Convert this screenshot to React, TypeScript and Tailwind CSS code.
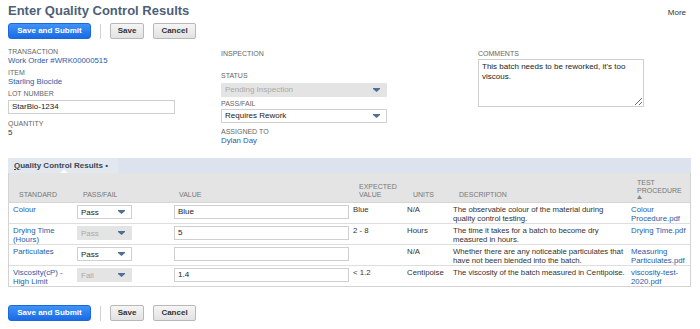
import React from "react";

type Row = {
  std: string[];
  pf: string;
  pfDisabled: boolean;
  value: string;
  expected: string;
  units: string;
  desc: string[];
  link: string[];
};

const ROWS: Row[] = [
  { std: ["Colour"], pf: "Pass", pfDisabled: false, value: "Blue", expected: "Blue", units: "N/A", desc: ["The observable colour of the material during", "quality control testing."], link: ["Colour", "Procedure.pdf"] },
  { std: ["Drying Time", "(Hours)"], pf: "Pass", pfDisabled: true, value: "5", expected: "2 - 8", units: "Hours", desc: ["The time it takes for a batch to become dry", "measured in hours."], link: ["Drying Time.pdf"] },
  { std: ["Particulates"], pf: "Pass", pfDisabled: false, value: "", expected: "", units: "N/A", desc: ["Whether there are any noticeable particulates that", "have not been blended into the batch."], link: ["Measuring", "Particulates.pdf"] },
  { std: ["Viscosity(cP) -", "High Limit"], pf: "Fail", pfDisabled: true, value: "1.4", expected: "< 1.2", units: "Centipoise", desc: ["The viscosity of the batch measured in Centipoise."], link: ["viscosity-test-", "2020.pdf"] },
];

const COLS = "grid grid-cols-[64px_97px_179px_54px_46px_178px_63px]";

function Arrow() {
  return (
    <svg width="7" height="4" viewBox="0 0 7 4">
      <path d="M0 0h7v1L3.5 4 0 1z" fill="#4f6f96" />
    </svg>
  );
}

function Select({ value, disabled, className }: { value: string; disabled?: boolean; className: string }) {
  return (
    <div
      className={`flex items-center justify-between border pl-[3px] pr-[6px] text-[8px] ${
        disabled ? "bg-[#e4e4e4] border-[#e4e4e4] text-[#aaaaaa]" : "bg-white border-[#cfcfcf] text-[#222]"
      } ${className}`}
    >
      <span>{value}</span>
      <Arrow />
    </div>
  );
}

function Label({ children, className = "" }: { children: React.ReactNode; className?: string }) {
  return <div className={`text-[7px] leading-[8px] text-[#666] uppercase ${className}`}>{children}</div>;
}

function Buttons() {
  return (
    <div className="flex items-center pl-[8px]">
      <button className="h-[16px] w-[83px] rounded-[3px] bg-gradient-to-b from-[#3f92f7] to-[#1a6be6] border border-[#1a68dd] text-white text-[8px] font-bold">
        Save and Submit
      </button>
      <div className="ml-[9px] h-[15px] w-px bg-[#d2d2d2]" />
      <button className="ml-[9px] h-[16px] w-[34px] rounded-[2px] bg-gradient-to-b from-[#f5f5f5] to-[#e2e2e2] border border-[#b8b8b8] text-[#333] text-[8px] font-bold">
        Save
      </button>
      <button className="ml-[9px] h-[16px] w-[43px] rounded-[2px] bg-gradient-to-b from-[#f5f5f5] to-[#e2e2e2] border border-[#b8b8b8] text-[#333] text-[8px] font-bold">
        Cancel
      </button>
    </div>
  );
}

export default function App() {
  return (
    <div className="w-[700px] h-[329px] overflow-hidden bg-white text-[#333] font-['Liberation_Sans',Arial,sans-serif]">
      {/* Title */}
      <div className="flex items-baseline justify-between pl-[8px] pr-[14px] pt-[3px]">
        <h1 className="text-[13px] leading-[16px] font-bold text-[#4d5f79]">Enter Quality Control Results</h1>
        <span className="text-[8px] text-[#333]">More</span>
      </div>

      <div className="mt-[4px]">
        <Buttons />
      </div>

      {/* Primary fields */}
      <div className="mt-[9px] flex pl-[8px]">
        <div className="w-[213px]">
          <Label>Transaction</Label>
          <div className="text-[7.8px] leading-[10px] text-[#2a5ca8]">Work Order #WRK00000515</div>
          <Label className="mt-[3px]">Item</Label>
          <div className="text-[7.8px] leading-[10px] text-[#2a5ca8]">Starling Biocide</div>
          <Label className="mt-[3px]">Lot Number</Label>
          <div className="mt-[2px] h-[14px] w-[167px] border border-[#cfcfcf] pl-[3px] text-[8px] leading-[12px] text-[#222]">
            StarBio-1234
          </div>
          <Label className="mt-[6px]">Quantity</Label>
          <div className="text-[8px] leading-[10px]">5</div>
        </div>

        <div className="w-[257px] pt-[2px]">
          <Label>Inspection</Label>
          <Label className="mt-[14px]">Status</Label>
          <Select value="Pending Inspection" disabled className="mt-[3px] h-[14px] w-[166px]" />
          <Label className="mt-[3px]">Pass/Fail</Label>
          <Select value="Requires Rework" className="mt-[1px] h-[14px] w-[166px]" />
          <Label className="mt-[5px]">Assigned To</Label>
          <div className="text-[7.8px] leading-[10px] text-[#2a5ca8]">Dylan Day</div>
        </div>

        <div className="w-[166px] pt-[2px]">
          <Label>Comments</Label>
          <textarea
            readOnly
            className="mt-[1px] block h-[48px] w-[166px] border border-[#cfcfcf] px-[3px] pt-[2px] text-[8px] leading-[10px] text-[#222] outline-none"
            value="This batch needs to be reworked, it's too viscous."
          />
        </div>
      </div>

      {/* Sublist */}
      <div className="mt-[12px] ml-[8px] w-[683px]">
        <div className="flex h-[15px] bg-[#dce3ee]">
          <div className="relative flex w-[110px] items-center bg-[#e3e7ee] pl-[6px] text-[8px] font-bold text-[#3b4656]">
            <span>
              <span className="underline">Q</span>uality Control Results •
            </span>
            <svg className="absolute left-[51px] bottom-0" width="10" height="3" viewBox="0 0 10 3">
              <path d="M0 3C3 3 3 0 5 0s2 3 5 3z" fill="#fff" />
            </svg>
          </div>
        </div>

        <div className="border-x border-b border-[#d3d3d3]">
          <div className={`${COLS} h-[30px] bg-[#e4e4e4] border-b border-[#d6d6d6] text-[7px] leading-[8px] text-[#777] uppercase`}>
            <div className="self-end pl-[10px] pb-[3px]">Standard</div>
            <div className="self-end pl-[10px] pb-[3px]">Pass/Fail</div>
            <div className="self-end pl-[9px] pb-[3px]">Value</div>
            <div className="self-end pl-[10px] pb-[3px]">Expected<br />Value</div>
            <div className="self-end pl-[10px] pb-[3px]">Units</div>
            <div className="self-end pl-[10px] pb-[3px]">Description</div>
            <div className="self-end pl-[10px] pb-[3px]">
              Test<br />Procedure<br />
              <svg width="5" height="4" viewBox="0 0 5 4">
                <path d="M2.5 0 5 4H0z" fill="#8a8a8a" />
              </svg>
            </div>
          </div>

          {ROWS.map((r, i) => (
            <div
              key={i}
              className={`${COLS} bg-white text-[7.8px] leading-[9px] ${i < ROWS.length - 1 ? "border-b border-[#dedede]" : ""}`}
            >
              <div className="pl-[4px] pt-[2px] h-[20px] text-[#2a5ca8]">
                {r.std.map((s) => (
                  <div key={s}>{s}</div>
                ))}
              </div>
              <div className="pl-[4px] pt-[2px]">
                <Select value={r.pf} disabled={r.pfDisabled} className="h-[14px] w-[55px]" />
              </div>
              <div className="pl-[4px] pt-[2px]">
                <div className="h-[14px] w-[175px] border border-[#cfcfcf] pl-[3px] text-[8px] leading-[12px] text-[#222]">{r.value}</div>
              </div>
              <div className="pl-[4px] pt-[2px]">{r.expected}</div>
              <div className="pl-[4px] pt-[2px]">{r.units}</div>
              <div className="pl-[4px] pt-[2px] whitespace-nowrap tracking-[-0.05px]">
                {r.desc.map((d) => (
                  <div key={d}>{d}</div>
                ))}
              </div>
              <div className="pl-[4px] pt-[2px] whitespace-nowrap text-[#2a5ca8]">
                {r.link.map((l) => (
                  <div key={l}>{l}</div>
                ))}
              </div>
            </div>
          ))}
        </div>
      </div>

      <div className="mt-[18px]">
        <Buttons />
      </div>
    </div>
  );
}
